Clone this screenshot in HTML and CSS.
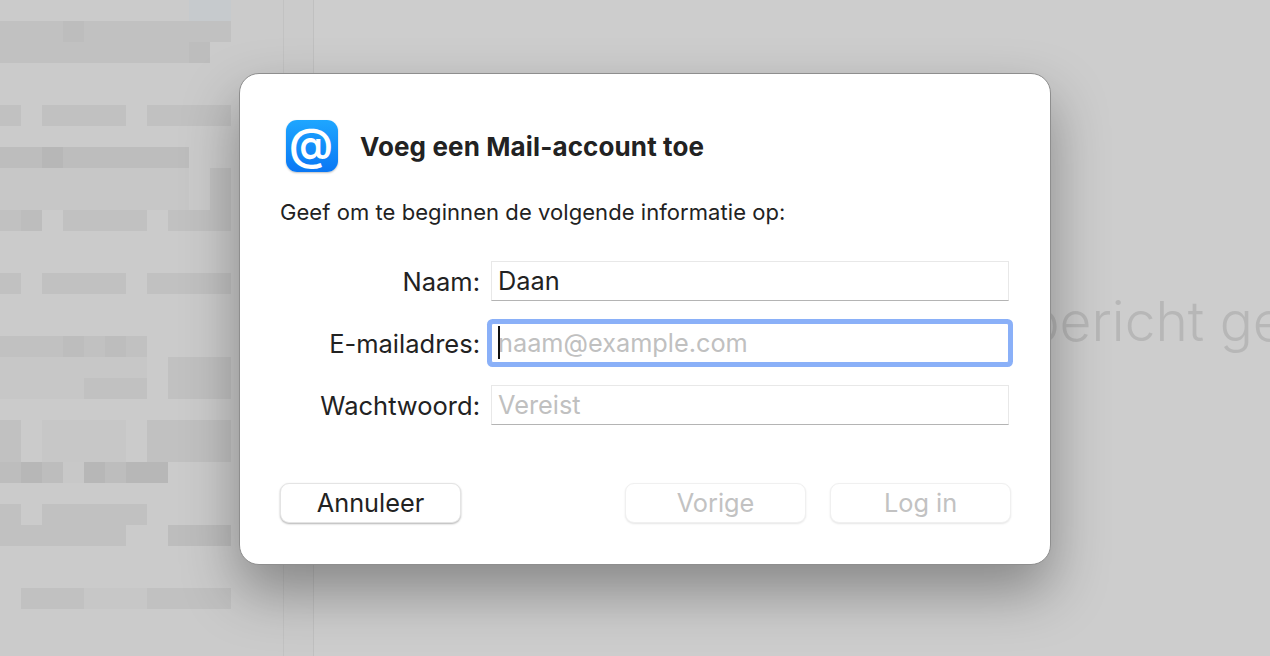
FILE: index.html
```html
<!DOCTYPE html>
<html lang="nl">
<head>
    <meta charset="UTF-8">
    <meta name="viewport" content="width=device-width, initial-scale=1.0">
    <title>Voeg een Mail-account toe</title>
    <link rel="stylesheet" href="styles.css">
</head>
<body>
    <div class="app">
        <aside class="sidebar">
            <!-- blurred mailbox list -->
            <svg class="mosaic" width="231" height="656" viewBox="0 0 231 656">
                <rect class="tint" x="189" y="0" width="42" height="21"/>
                <rect class="m2" x="0" y="21" width="231" height="21"/>
                <rect class="m3" x="63" y="21" width="21" height="21"/>
                <rect class="m2" x="0" y="42" width="210" height="21"/>
                <rect class="m3" x="189" y="42" width="21" height="21"/>
                <rect class="m2" x="0" y="105" width="21" height="21"/>
                <rect class="m2" x="42" y="105" width="84" height="21"/>
                <rect class="m2" x="147" y="105" width="84" height="21"/>
                <rect class="m3" x="0" y="147" width="189" height="21"/>
                <rect class="m4" x="42" y="147" width="21" height="21"/>
                <rect class="m1" x="0" y="168" width="189" height="42"/>
                <rect class="m2" x="210" y="168" width="21" height="42"/>
                <rect class="m2" x="0" y="210" width="42" height="21"/>
                <rect class="m3" x="21" y="210" width="21" height="21"/>
                <rect class="m2" x="63" y="210" width="84" height="21"/>
                <rect class="m2" x="168" y="210" width="63" height="21"/>
                <rect class="m2" x="0" y="273" width="21" height="21"/>
                <rect class="m2" x="42" y="273" width="84" height="21"/>
                <rect class="m2" x="147" y="273" width="84" height="21"/>
                <rect class="m2" x="0" y="336" width="147" height="21"/>
                <rect class="m3" x="63" y="336" width="21" height="21"/>
                <rect class="m3" x="105" y="336" width="21" height="21"/>
                <rect class="m1" x="0" y="357" width="147" height="42"/>
                <rect class="m2" x="84" y="378" width="63" height="21"/>
                <rect class="m2" x="168" y="357" width="63" height="42"/>
                <rect class="m2" x="0" y="420" width="21" height="42"/>
                <rect class="m1" x="42" y="420" width="84" height="42"/>
                <rect class="m2" x="147" y="420" width="84" height="42"/>
                <rect class="m3" x="0" y="462" width="168" height="21"/>
                <rect class="m4" x="21" y="462" width="21" height="21"/>
                <rect class="m0" x="63" y="462" width="21" height="21"/>
                <rect class="m4" x="84" y="462" width="21" height="21"/>
                <rect class="m4" x="126" y="462" width="42" height="21"/>
                <rect class="m2" x="0" y="504" width="21" height="21"/>
                <rect class="m2" x="42" y="504" width="105" height="21"/>
                <rect class="m2" x="0" y="525" width="126" height="21"/>
                <rect class="m3" x="168" y="525" width="63" height="21"/>
                <rect class="m2" x="21" y="588" width="63" height="21"/>
                <rect class="m1" x="84" y="588" width="63" height="21"/>
                <rect class="m2" x="147" y="588" width="84" height="21"/>
            </svg>
        </aside>
        <div class="list-pane"></div>
        <main class="message-pane">
            <p class="no-message">Geen bericht geselecteerd</p>
        </main>
    </div>

    <div class="dialog">
        <div class="dialog-header">
            <div class="mail-icon"><span>@</span></div>
            <h1>Voeg een Mail-account toe</h1>
        </div>
        <p class="intro">Geef om te beginnen de volgende informatie op:</p>

        <form class="account-form">
            <div class="form-row">
                <label for="name">Naam:</label>
                <div class="field"><input type="text" id="name" value="Daan"></div>
            </div>
            <div class="form-row">
                <label for="email">E-mailadres:</label>
                <div class="field focused">
                    <input type="text" id="email" placeholder="naam@example.com">
                    <span class="caret"></span>
                </div>
            </div>
            <div class="form-row">
                <label for="password">Wachtwoord:</label>
                <div class="field"><input type="text" id="password" placeholder="Vereist"></div>
            </div>
        </form>

        <div class="dialog-buttons">
            <button type="button">Annuleer</button>
            <span class="spacer"></span>
            <button type="button" class="disabled">Vorige</button>
            <button type="button" class="disabled">Log in</button>
        </div>
    </div>
</body>
</html>
```

FILE: styles.css
```css
* {
    box-sizing: border-box;
}

body {
    margin: 0;
    height: 656px;
    overflow: hidden;
    background-color: #cdcdcd;
    font-family: Inter, "Liberation Sans", sans-serif;
    color: #222;
}

.app {
    display: flex;
    height: 656px;
}

.sidebar {
    width: 284px;
    flex-shrink: 0;
    background-color: #cbcbcb;
    border-right: 1px solid #c2c2c2;
}

.mosaic {
    display: block;
}

.m0 { fill: #c8c8c8; }
.m1 { fill: #c7c7c7; }
.m2 { fill: #c1c1c1; }
.m3 { fill: #bdbdbd; }
.m4 { fill: #b7b7b7; }
.tint { fill: #c6cacd; }

.list-pane {
    width: 30px;
    flex-shrink: 0;
    background-color: #cbcbcb;
    border-right: 1px solid #c0c0c0;
}

.message-pane {
    flex: 1;
    min-width: 0;
    display: flex;
    align-items: center;
    padding: 0 0 14px 560px;
    overflow: hidden;
}

.no-message {
    margin: 0;
    font-size: 55px;
    font-weight: 300;
    color: #b7b7b7;
    white-space: nowrap;
}

/* sheet sits on top of the window */
.dialog {
    position: absolute;
    left: 239px;
    top: 73px;
    width: 812px;
    height: 492px;
    padding: 46px 39px 0 40px;
    background-color: #fff;
    border: 1px solid #8e8e8e;
    border-radius: 20px;
    box-shadow: 0 26px 55px rgba(0, 0, 0, 0.34);
}

.dialog-header {
    display: flex;
    align-items: center;
    gap: 22px;
    padding-left: 6px;
}

.dialog-header h1 {
    margin: 0;
    font-size: 26px;
    font-weight: 700;
    letter-spacing: 0.12px;
}

.mail-icon {
    width: 52px;
    height: 52px;
    display: flex;
    align-items: center;
    justify-content: center;
    padding: 0 2px 5px 0;
    background: linear-gradient(#1ea6ff, #0a77f4);
    border-radius: 11px;
    box-shadow: 0 1px 2px rgba(0, 0, 0, 0.25);
    color: #fff;
    font-size: 44px;
    font-weight: 600;
    line-height: 1;
}

.intro {
    margin: 27px 0 0;
    font-size: 22px;
    letter-spacing: 0.06px;
}

.account-form {
    display: flex;
    flex-direction: column;
    gap: 22px;
    margin-top: 36px;
}

.form-row {
    display: flex;
    align-items: center;
    gap: 11px;
}

.form-row label {
    width: 200px;
    text-align: right;
    font-size: 25.5px;
}

.field {
    position: relative;
    width: 518px;
    height: 40px;
    background-color: #fff;
    border: 1px solid #e8e8e8;
    border-bottom-color: #b4b4b4;
}

.field input {
    width: 100%;
    height: 100%;
    padding: 0 6px 2px;
    border: none;
    outline: none;
    background: none;
    font-family: inherit;
    font-size: 25.3px;
    color: #222;
}

.field input::placeholder {
    color: #c0c0c0;
    opacity: 1;
}

.field.focused {
    border: 1px solid #8ab0f8;
    border-radius: 2px;
    box-shadow: 0 0 0 4px #8ab0f8;
}

.caret {
    position: absolute;
    left: 6px;
    top: 2px;
    width: 2px;
    height: 33px;
    background-color: #111;
}

.dialog-buttons {
    display: flex;
    gap: 24px;
    margin-top: 58px;
}

.spacer {
    flex: 1;
}

.dialog-buttons button {
    width: 181px;
    height: 40px;
    padding: 0 0 2px;
    background-color: #fff;
    border: 1px solid #e4e4e4;
    border-radius: 9px;
    box-shadow: 0 1px 2px rgba(0, 0, 0, 0.3);
    font-family: inherit;
    font-size: 25.3px;
    color: #222;
}

.dialog-buttons .disabled {
    color: #c2c2c2;
    border-color: #f0f0f0;
    box-shadow: 0 1px 2px rgba(0, 0, 0, 0.1);
}
```
